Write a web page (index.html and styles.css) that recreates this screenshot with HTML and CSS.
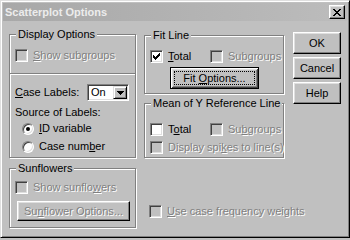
FILE: index.html
```html
<!DOCTYPE html>
<html lang="en">
<head>
  <meta charset="UTF-8" />
  <title>Scatterplot Options</title>
  <link rel="stylesheet" href="styles.css">
</head>
<body>
  <div class="window">
    <div class="titlebar">
      <span class="title">Scatterplot Options</span>
      <span class="close-btn">
        <svg width="8" height="7" viewBox="0 0 8 7" shape-rendering="crispEdges">
          <path d="M0 0h2v1H0zM6 0h2v1H6zM1 1h2v1H1zM5 1h2v1H5zM2 2h4v1H2zM3 3h2v1H3zM2 4h4v1H2zM1 5h2v1H1zM5 5h2v1H5zM0 6h2v1H0zM6 6h2v1H6z" fill="#000"/>
        </svg>
      </span>
    </div>

    <div class="content">
      <div class="col-left">
        <fieldset class="group display-opts">
          <legend>Display Options</legend>
          <div class="opt disabled show-sub"><span class="box"></span><span><u>S</u>how subgroups</span></div>
          <div class="divider"></div>
          <div class="case-row">
            <span class="case-label"><u>C</u>ase Labels:</span>
            <span class="combo">
              <span class="combo-text">On</span>
              <span class="combo-btn">
                <svg width="7" height="4" viewBox="0 0 7 4" shape-rendering="crispEdges"><path d="M0 0h7v1H0zM1 1h5v1H1zM2 2h3v1H2zM3 3h1v1H3z" fill="#000"/></svg>
              </span>
            </span>
          </div>
          <div class="source">Source of Labels:</div>
          <div class="opt radio-opt id-var"><span class="radio"><span class="dot"></span></span><span><u>I</u>D variable</span></div>
          <div class="opt radio-opt case-num"><span class="radio"></span><span>Case num<u>b</u>er</span></div>
        </fieldset>

        <fieldset class="group sunflowers">
          <legend>Sunflowers</legend>
          <div class="opt disabled show-sun"><span class="box"></span><span>Show sunflo<u>w</u>ers</span></div>
          <button class="btn disabled sun-btn"><span>Su<u>n</u>flower Options...</span></button>
        </fieldset>
      </div>

      <div class="col-mid">
        <fieldset class="group fit-line">
          <legend>Fit Line</legend>
          <div class="pair fit-pair">
            <div class="opt"><span class="box">
              <svg width="7" height="7" viewBox="0 0 7 7" shape-rendering="crispEdges"><path d="M6 0h1v1H6zM5 1h2v1H5zM0 2h1v1H0zM4 2h3v1H4zM0 3h2v1H0zM3 3h3v1H3zM0 4h5v1H0zM1 5h3v1H1zM2 6h1v1H2z" fill="#000"/></svg>
            </span><span><u>T</u>otal</span></div>
            <div class="opt disabled"><span class="box"></span><span>Subgroups</span></div>
          </div>
          <button class="btn default fit-btn"><span class="focus">Fit <u>O</u>ptions...</span></button>
        </fieldset>

        <fieldset class="group mean-line">
          <legend>Mean of Y Reference Line</legend>
          <div class="pair mean-pair">
            <div class="opt"><span class="box"></span><span>T<u>o</u>tal</span></div>
            <div class="opt disabled"><span class="box"></span><span>Su<u>b</u>groups</span></div>
          </div>
          <div class="opt disabled spikes"><span class="box"></span><span>Display spi<u>k</u>es to line(s)</span></div>
        </fieldset>

        <div class="opt disabled weights"><span class="box"></span><span><u>U</u>se case frequency weights</span></div>
      </div>

      <div class="col-right">
        <button class="btn side-btn">OK</button>
        <button class="btn side-btn">Cancel</button>
        <button class="btn side-btn">Help</button>
      </div>
    </div>
  </div>
</body>
</html>
```

FILE: styles.css
```css
body { margin: 0; background: #c0c0c0; font-family: "Liberation Sans", Arial, sans-serif; font-size: 11px; line-height: 13px; color: #000; }
u { text-decoration: underline; }

.window { width: 350px; height: 238px; box-sizing: border-box; padding: 2px; background: #c0c0c0;
  border: 1px solid; border-color: #dfdfdf #000 #000 #dfdfdf; box-shadow: inset 1px 1px #fff, inset -1px -1px #808080; }

.titlebar { height: 18px; padding: 0 2px; display: flex; align-items: center; justify-content: space-between;
  background: linear-gradient(to right, #a8a8a8, #bcbcbc); }
.title { font-weight: bold; color: #ececec; line-height: 18px; }
.close-btn { width: 16px; height: 14px; box-sizing: border-box; display: flex; align-items: center; justify-content: center; background: #c0c0c0;
  border: 1px solid; border-color: #fff #000 #000 #fff; box-shadow: inset -1px -1px #808080, inset 1px 1px #dfdfdf; }

.content { display: flex; padding: 7px 0 0 6px; }
.col-left { width: 127px; }
.col-mid { width: 140px; margin-left: 8px; }
.col-right { width: 48px; margin-left: 9px; display: flex; flex-direction: column; gap: 3px; padding-top: 4px; }

/* group boxes */
.group { margin: 0; padding: 0 0 4px; min-width: 0; border: 1px solid #808080; box-shadow: inset 1px 1px #fff, 1px 1px #fff; }
.group legend { margin-left: 6px; padding: 0 2px; line-height: 13px; background: #c0c0c0; }

.opt { display: flex; align-items: center; gap: 5px; height: 13px; white-space: nowrap; }
.disabled { color: #808080; text-shadow: 1px 1px 0 #fff; }

.box { width: 13px; height: 13px; box-sizing: border-box; flex: none; display: flex; align-items: center; justify-content: center; background: #fff;
  border: 1px solid; border-color: #808080 #fff #fff #808080; box-shadow: inset 1px 1px #404040, inset -1px -1px #dfdfdf; }
.disabled .box { background: #c0c0c0; }

.radio { width: 12px; height: 12px; box-sizing: border-box; flex: none; border-radius: 50%; display: flex; align-items: center; justify-content: center; background: #fff;
  border: 1px solid; border-color: #808080 #fff #fff #808080; box-shadow: inset 1px 1px #404040, inset -1px -1px #dfdfdf; }
.dot { width: 4px; height: 4px; border-radius: 50%; background: #000; }

.btn { box-sizing: border-box; height: 22px; padding: 0; margin: 0; display: flex; align-items: center; justify-content: center; font: inherit; color: #000; background: #c0c0c0;
  border: 1px solid; border-color: #fff #000 #000 #fff; box-shadow: inset -1px -1px #808080, inset 1px 1px #dfdfdf; }
.btn.disabled { color: #808080; }
.btn.default { border-color: #000; padding: 3px; box-shadow: inset 1px 1px #fff, inset -1px -1px #404040, inset 2px 2px #dfdfdf, inset -2px -2px #808080; }
.focus { flex: 1; align-self: stretch; line-height: 12px; text-align: center; border: 1px dotted #000; }

/* display options */
.show-sub { margin: 8px 0 0 5px; }
.divider { margin-top: 11px; height: 0; border-top: 1px solid #808080; border-bottom: 1px solid #fff; }
.case-row { margin: 9px 0 0 5px; display: flex; align-items: center; height: 17px; }
.case-label { width: 72px; }
.combo { width: 42px; height: 17px; box-sizing: border-box; padding: 1px; display: flex; background: #fff;
  border: 1px solid; border-color: #808080 #fff #fff #808080; box-shadow: inset 1px 1px #404040, inset -1px -1px #dfdfdf; }
.combo-text { flex: 1; padding-left: 2px; line-height: 13px; }
.combo-btn { width: 14px; height: 13px; box-sizing: border-box; display: flex; align-items: center; justify-content: center; background: #c0c0c0;
  border: 1px solid; border-color: #dfdfdf #000 #000 #dfdfdf; box-shadow: inset 1px 1px #fff, inset -1px -1px #808080; }
.source { margin: 5px 0 0 5px; }
.radio-opt { padding-left: 12px; gap: 5px; }
.id-var { margin-top: 3px; }
.case-num { margin-top: 5px; }

/* sunflowers */
.sunflowers { margin-top: 4px; padding-bottom: 6px; }
.show-sun { margin: 6px 0 0 5px; }
.sun-btn { width: 113px; height: 20px; margin: 7px 0 0 7px; }

/* fit line */
.fit-line { margin-top: 1px; }
.pair { display: grid; grid-template-columns: 60px auto; padding-left: 5px; }
.fit-pair { margin-top: 8px; }
.fit-btn { width: 89px; margin: 4px 0 0 25px; }

.mean-line { margin-top: 3px; padding-bottom: 3px; }
.mean-pair { margin-top: 13px; }
.spikes { margin: 5px 0 0 5px; }

.weights { margin: 47px 0 0 5px; }
```
